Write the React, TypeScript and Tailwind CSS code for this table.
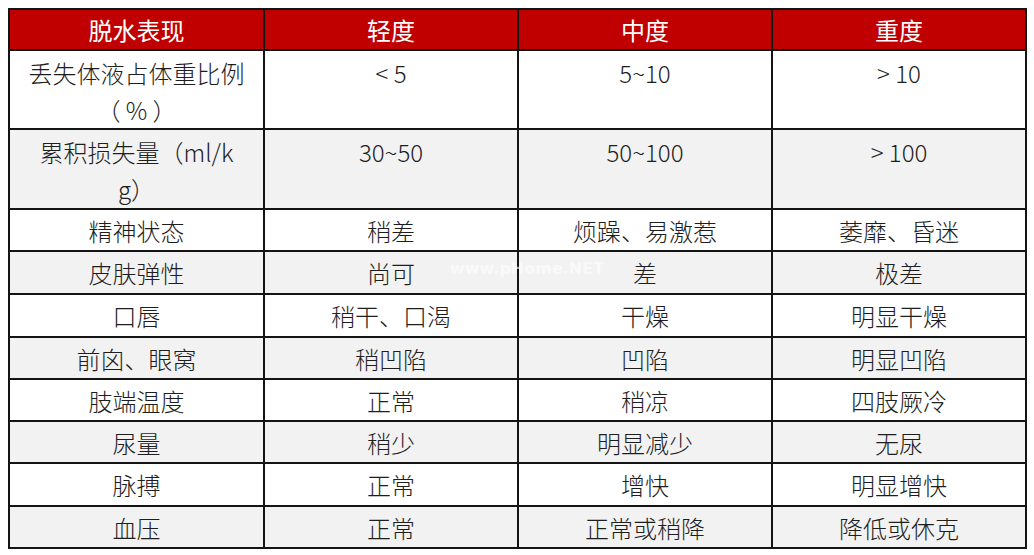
import React from "react";

type Row = { cells: React.ReactNode[]; gray: boolean; h: string; tall?: boolean };

const rows: Row[] = [
  {
    cells: [
      <>
        丢失体液占体重比例
        <br />（ % ）
      </>,
      "< 5",
      "5~10",
      "> 10",
    ],
    gray: false,
    h: "h-[79px]",
    tall: true,
  },
  {
    cells: [
      <>
        累积损失量（ml/k
        <br />
        g）
      </>,
      "30~50",
      "50~100",
      "> 100",
    ],
    gray: true,
    h: "h-[80px]",
    tall: true,
  },
  { cells: ["精神状态", "稍差", "烦躁、易激惹", "萎靡、昏迷"], gray: false, h: "h-[42px]" },
  { cells: ["皮肤弹性", "尚可", "差", "极差"], gray: true, h: "h-[43px]" },
  { cells: ["口唇", "稍干、口渴", "干燥", "明显干燥"], gray: false, h: "h-[43px]" },
  { cells: ["前囟、眼窝", "稍凹陷", "凹陷", "明显凹陷"], gray: true, h: "h-[42px]" },
  { cells: ["肢端温度", "正常", "稍凉", "四肢厥冷"], gray: false, h: "h-[42px]" },
  { cells: ["尿量", "稍少", "明显减少", "无尿"], gray: true, h: "h-[42px]" },
  { cells: ["脉搏", "正常", "增快", "明显增快"], gray: false, h: "h-[43px]" },
  { cells: ["血压", "正常", "正常或稍降", "降低或休克"], gray: true, h: "h-[42px]" },
];

const headers = ["脱水表现", "轻度", "中度", "重度"];

export default function App() {
  return (
    <div className="relative h-[555px] w-[1034px] bg-white pl-[8px] pt-[8px] font-['Noto_Sans_CJK_SC','Noto_Sans',sans-serif]">
      <table className="w-[1017px] table-fixed border-collapse border-2 border-[#141414] text-[24px] font-light leading-[37px] text-[#1e1e1e]">
        <colgroup>
          <col className="w-[255px]" />
          <col className="w-[254px]" />
          <col className="w-[254px]" />
          <col className="w-[254px]" />
        </colgroup>
        <thead>
          <tr className="h-[41px] bg-[#c00000]">
            {headers.map((h) => (
              <th
                key={h}
                className="border-2 border-[#141414] p-0 text-center align-middle font-normal text-white"
              >
                {h}
              </th>
            ))}
          </tr>
        </thead>
        <tbody>
          {rows.map((r, i) => (
            <tr
              key={i}
              className={`${r.h} ${r.gray ? "bg-[#f2f2f2]" : "bg-white"}`}
            >
              {r.cells.map((c, j) => (
                <td
                  key={j}
                  className={`border-2 border-[#141414] px-1 text-center ${
                    r.tall ? "pb-0 pt-[3px] align-top" : "py-0 align-middle"
                  }`}
                >
                  {c}
                </td>
              ))}
            </tr>
          ))}
        </tbody>
      </table>
      {/* faint watermark laid over the table */}
      <span className="pointer-events-none absolute left-[450px] top-[259px] font-['DejaVu_Sans',sans-serif] text-[16px] font-bold leading-[20px] text-white/60">
        www.pHome.NET
      </span>
    </div>
  );
}
